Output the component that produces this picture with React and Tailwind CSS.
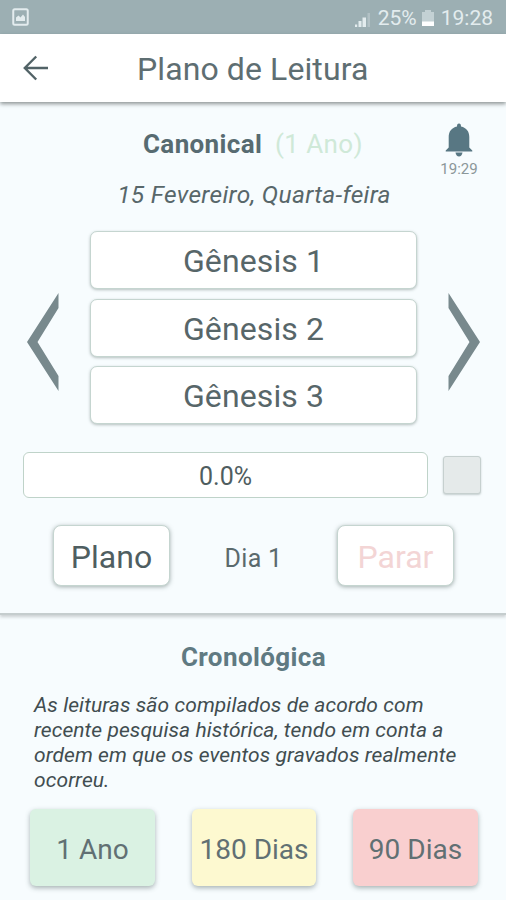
import React, { useState } from 'react';

const readings = ['Gênesis 1', 'Gênesis 2', 'Gênesis 3'];

const durations = [
    { label: '1 Ano', color: 'bg-[#daf2e3]', width: 'w-[125px]' },
    { label: '180 Dias', color: 'bg-[#fdf9d0]', width: 'w-[124px]' },
    { label: '90 Dias', color: 'bg-[#f9cfcf]', width: 'w-[125px]' },
];

const StatusBar = () => (
    <div className="flex h-[34px] items-center justify-between bg-[#9cafb3] pl-[12px] pr-[13px] text-[#e3ecee]">
        <svg width="17" height="18" viewBox="0 0 17 18" fill="none">
            <rect x="1.25" y="1.25" width="14.5" height="15.5" rx="1.5" stroke="currentColor" strokeWidth="2" />
            <path d="M4 13V9.5L6.5 7.5L8.5 9.5L11 6.5L13 9V13Z" fill="currentColor" />
        </svg>
        <div className="flex items-center pt-[3px]">
            <svg width="18" height="18" viewBox="0 0 18 18" className="mr-[6px]">
                <path d="M1 14.500h2.200v2.500h-2.200zM4.500 11h3v6h-3zM8.500 7.500h3.500v9.500h-3.500z" fill="currentColor" />
                <path d="M13.500 3h2.500v14h-2.500z" fill="currentColor" opacity="0.3" />
            </svg>
            <span className="w-[39px] whitespace-nowrap text-[21px] leading-none">25%</span>
            <svg width="12" height="18" viewBox="0 0 12 18" className="ml-[5px] mr-[7px]">
                <path d="M3 0h6v2h3v14h-12v-14h3z" fill="currentColor" opacity="0.55" />
                <path d="M0 11.5h12v4.5h-12z" fill="#ffffff" />
            </svg>
            <span className="text-[21px] leading-none">19:28</span>
        </div>
    </div>
);

const Header = () => (
    <header className="relative flex h-[68px] items-center bg-white shadow-[0_2px_4px_rgba(70,80,80,0.6)]">
        <button className="ml-[23px]" title="Voltar">
            <svg width="26" height="26" viewBox="0 0 26 26" fill="none" stroke="#526367" strokeWidth="2.4">
                <path d="M25 13H2M13.2 1.5L1.8 13L13.2 24.5" />
            </svg>
        </button>
        <h1 className="ml-[88px] whitespace-nowrap pt-[2px] text-[32px] leading-none tracking-[0.1px] text-[#5e6e72]">Plano de Leitura</h1>
    </header>
);

const Arrow = ({ right, onClick }) => (
    <button onClick={onClick} className={right ? 'ml-[31px] pt-[28px]' : 'mr-[31px] pt-[28px]'}>
        <svg width="32" height="98" viewBox="0 0 32 98" className={right ? 'rotate-180' : ''}>
            <path d="M31.500 0V15L10.5 49L31.500 83V98L0 49Z" fill="#78898d" />
        </svg>
    </button>
);

const Bell = () => (
    <svg width="28" height="34" viewBox="0 0 28 34" fill="#587783">
        <path d="M14 0.5C15.500 0.500 16 1.500 16 3.500C21.500 4.800 24.300 8.500 24.300 14V24.500L27.300 27.500V28.500H0.700V27.500L3.700 24.500V14C3.700 8.500 6.500 4.800 12 3.500C12 1.500 12.500 0.500 14 0.500Z" />
        <path d="M10.500 29.500H17.500Q16.800 33.500 14 33.500T10.500 29.500Z" />
    </svg>
);

const CurrentPlan = () => {
    const [day, setDay] = useState(1);
    const [done, setDone] = useState(false);

    return (
        <section className="h-[513px] border-b-2 border-[#c5cdce] pt-[21px] shadow-[0_2px_3px_rgba(70,80,80,0.25)]">
            {/* Plan name and reminder */}
            <div className="flex h-[55px] justify-between">
                <div className="ml-[143px] flex h-[40px] items-center whitespace-nowrap pt-px text-[25px] leading-none">
                    <h2 className="w-[132px] text-[26px] font-bold tracking-[0.35px] text-[#576b71]">Canonical</h2>
                    <span className="text-[26px] tracking-[0.4px] text-[#cfe9d8]">(1 Ano)</span>
                </div>
                <button className="mr-[27px] flex w-[40px] flex-col items-center text-[15px] leading-none text-[#8b9799]">
                    <Bell />
                    <span className="mt-[5px]">19:29</span>
                </button>
            </div>
            <p className="pl-[2px] text-center text-[24.500px] italic leading-[34px] tracking-[0.32px] text-[#58676a]">15 Fevereiro, Quarta-feira</p>

            {/* Readings of the day */}
            <div className="mt-[19px] flex items-center pl-[27px]">
                <Arrow onClick={() => setDay(Math.max(1, day - 1))} />
                <div className="flex w-[327px] flex-col gap-[9.500px]">
                    {readings.map((reading) => (
                        <button
                            key={reading}
                            className="h-[58px] rounded-[7px] border border-[#c5d5d0] bg-white pt-[2px] text-[32px] leading-none tracking-[0.1px] text-[#576669] shadow-[0_1px_3px_rgba(80,100,95,0.4)]"
                        >
                            {reading}
                        </button>
                    ))}
                </div>
                <Arrow right onClick={() => setDay(day + 1)} />
            </div>

            {/* Progress */}
            <div className="mt-[28px] flex items-center pl-[23px]">
                <div className="flex h-[46px] w-[405px] items-center justify-center rounded-[6px] border border-[#bfd3c9] bg-white pt-[2px] text-[25px] leading-none text-[#4f5d60]">
                    0.0%
                </div>
                <button
                    onClick={() => setDone(!done)}
                    className="ml-[15px] h-[38px] w-[38px] rounded-[3px] border border-[#c6d0cf] bg-[#e5eaea] shadow-[0_1px_2px_rgba(80,100,95,0.3)]"
                >
                    {done ? '✓' : ''}
                </button>
            </div>
            <div className="mt-[27px] flex items-center justify-between pl-[53px] pr-[52px] leading-none">
                <button className="h-[61px] w-[117px] rounded-[8px] border border-[#c5d5d0] bg-white pt-[2px] text-[32px] text-[#4f5e61] shadow-[0_1px_4px_rgba(80,100,95,0.5)]">Plano</button>
                <span className="pt-[6px] text-[25px] tracking-[0.3px] text-[#5b6a6d]">Dia {day}</span>
                <button className="h-[61px] w-[117px] rounded-[8px] border border-[#c5d5d0] bg-white pt-[2px] text-[32px] text-[#f3d5d5] shadow-[0_1px_4px_rgba(80,100,95,0.5)]">Parar</button>
            </div>
        </section>
    );
};

const PlanOption = () => (
    <section className="pt-[25px]">
        <h2 className="pl-px text-center text-[26px] font-bold leading-[34px] tracking-[0.4px] text-[#607a82]">Cronológica</h2>
        <p className="ml-[34px] mt-[19px] whitespace-nowrap text-[21px] italic leading-[25px] tracking-[0.08px] text-[#414d50]">
            As leituras são compilados de acordo com<br />
            recente pesquisa histórica, tendo em conta a<br />
            ordem em que os eventos gravados realmente<br />
            ocorreu.
        </p>
        <div className="mt-[16px] flex justify-between pl-[30px] pr-[28px]">
            {durations.map(({ label, color, width }) => (
                <button
                    key={label}
                    className={`h-[77px] whitespace-nowrap rounded-[6px] pt-[4px] text-[28px] leading-none text-[#617073] shadow-[0_2px_5px_rgba(70,90,90,0.45)] ${color} ${width}`}
                >
                    {label}
                </button>
            ))}
        </div>
    </section>
);

export default function App() {
    return (
        <div className="h-[900px] w-[506px] overflow-hidden bg-[#f7fcfe] font-['Roboto',sans-serif]">
            <StatusBar />
            <Header />
            <CurrentPlan />
            <PlanOption />
        </div>
    );
}
